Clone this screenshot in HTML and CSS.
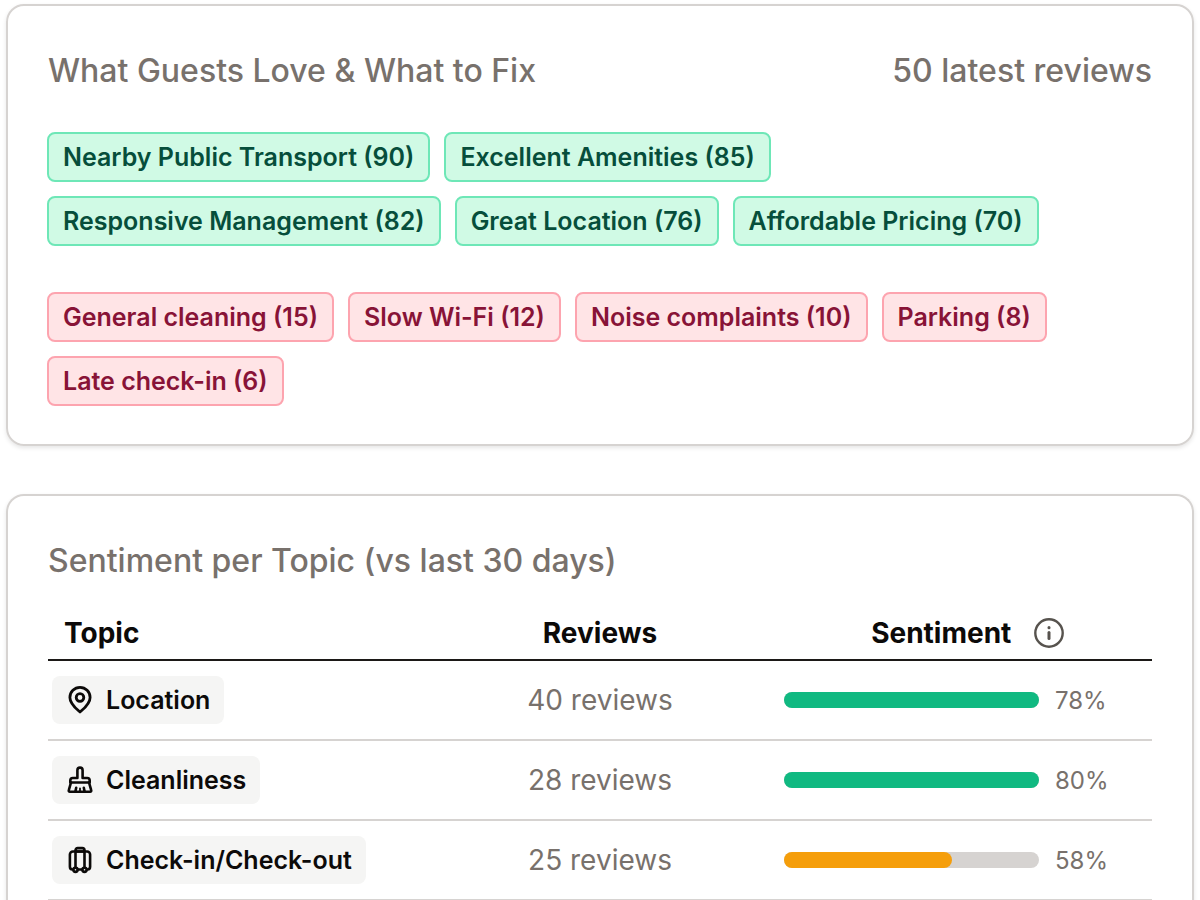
FILE: index.html
```html
<!DOCTYPE html>
<html lang="en">
<head>
    <meta charset="UTF-8">
    <meta name="viewport" content="width=device-width, initial-scale=1.0">
    <title>Guest Reviews</title>
    <link rel="stylesheet" href="styles.css">
</head>
<body>
    <main class="page">
        <!-- review highlights -->
        <section class="card">
            <div class="card-header">
                <h2>What Guests Love &amp; What to Fix</h2>
                <p>50 latest reviews</p>
            </div>
            <ul class="tags tags-good">
                <li>Nearby Public Transport (90)</li>
                <li>Excellent Amenities (85)</li>
                <li>Responsive Management (82)</li>
                <li>Great Location (76)</li>
                <li>Affordable Pricing (70)</li>
            </ul>
            <ul class="tags tags-bad">
                <li>General cleaning (15)</li>
                <li>Slow Wi-Fi (12)</li>
                <li>Noise complaints (10)</li>
                <li>Parking (8)</li>
                <li>Late check-in (6)</li>
            </ul>
        </section>

        <!-- sentiment table -->
        <section class="card card-open">
            <div class="card-header">
                <h2>Sentiment per Topic (vs last 30 days)</h2>
            </div>
            <table class="topics">
                <thead>
                    <tr>
                        <th class="col-topic">Topic</th>
                        <th class="col-reviews">Reviews</th>
                        <th class="col-sentiment">
                            <div class="sentiment-title">
                                Sentiment
                                <button class="info" type="button" aria-label="About sentiment">
                                    <svg viewBox="0 0 32 32" width="32" height="32" fill="none" stroke="currentColor" stroke-width="2.4" stroke-linecap="round">
                                        <circle cx="16" cy="16" r="13.7"/>
                                        <path d="M16 15.5v6" stroke-width="3"/>
                                        <path d="M16 10.6v.2" stroke-width="3"/>
                                    </svg>
                                </button>
                            </div>
                        </th>
                    </tr>
                </thead>
                <tbody>
                    <tr>
                        <td>
                            <span class="topic">
                                <svg viewBox="0 0 32 32" width="32" height="32" fill="none" stroke="currentColor" stroke-width="2.8" stroke-linejoin="round">
                                    <path d="M16 28C12.6 25 5.9 20 5.9 13.4a10.1 10.1 0 0 1 20.2 0C26.1 20 19.4 25 16 28z"/>
                                    <circle cx="16" cy="13.5" r="3.8"/>
                                </svg>
                                Location
                            </span>
                        </td>
                        <td class="count">40 reviews</td>
                        <td>
                            <div class="score">
                                <div class="bar"><div class="fill fill-good"></div></div>
                                <span>78%</span>
                            </div>
                        </td>
                    </tr>
                    <tr>
                        <td>
                            <span class="topic">
                                <svg viewBox="0 0 32 32" width="32" height="32" fill="none" stroke="currentColor" stroke-width="2.6" stroke-linejoin="round" stroke-linecap="round">
                                    <path d="M13.4 14V6.2a2.6 2.6 0 0 1 5.2 0V14H23.2a2.5 2.5 0 0 1 2.5 2.5V18.5H6.3V16.5a2.5 2.5 0 0 1 2.5-2.5z"/>
                                    <path d="M7 18.5L4.8 26.2a1.1 1.1 0 0 0 1 1.5H26.2a1.1 1.1 0 0 0 1-1.5L25 18.5"/>
                                    <path d="M12.2 23.8L11.4 27.5M19.8 23.8L20.6 27.5"/>
                                    <path d="M16 24.5V27.5" stroke-width="1.8"/>
                                </svg>
                                Cleanliness
                            </span>
                        </td>
                        <td class="count">28 reviews</td>
                        <td>
                            <div class="score">
                                <div class="bar"><div class="fill fill-good"></div></div>
                                <span>80%</span>
                            </div>
                        </td>
                    </tr>
                    <tr>
                        <td>
                            <span class="topic">
                                <svg viewBox="0 0 32 32" width="32" height="32" fill="none" stroke="currentColor" stroke-width="2.6" stroke-linejoin="round" stroke-linecap="round">
                                    <path d="M8.5 25.5a2.8 2.8 0 0 1-2.6-2.8V10.5a3 3 0 0 1 3-3H23.1a3 3 0 0 1 3 3V22.7a2.8 2.8 0 0 1-2.6 2.8"/>
                                    <path d="M11.5 23.5V6.3a2.2 2.2 0 0 1 2.2-2.2H18.3a2.2 2.2 0 0 1 2.2 2.2V23.5M11.5 7.5H20.5M14 25.5H18"/>
                                    <circle cx="11.5" cy="25.8" r="2.1"/>
                                    <circle cx="20.5" cy="25.8" r="2.1"/>
                                </svg>
                                Check-in/Check-out
                            </span>
                        </td>
                        <td class="count">25 reviews</td>
                        <td>
                            <div class="score">
                                <div class="bar"><div class="fill fill-mid"></div></div>
                                <span>58%</span>
                            </div>
                        </td>
                    </tr>
                </tbody>
            </table>
        </section>
    </main>
</body>
</html>
```
FILE: styles.css
```css
* {
    box-sizing: border-box;
}

body {
    margin: 0;
    background-color: #ffffff;
    color: #0c0a09;
    font-family: 'Inter', sans-serif;
}

h2, p, ul {
    margin: 0;
    padding: 0;
}

.page {
    display: flex;
    flex-direction: column;
    gap: 48px;
    padding: 4px 6px 0;
}

.card {
    padding: 40px 40px 38px;
    border: 2px solid #d6d3d1;
    border-radius: 18px;
    box-shadow: 0 2px 4px rgba(0, 0, 0, 0.1);
}

.card-open {
    padding-bottom: 0;
    border-bottom: none;
    border-radius: 18px 18px 0 0;
}

.card-header {
    display: flex;
    justify-content: space-between;
    line-height: 50px;
    color: #78716c;
}

.card-header h2,
.card-header p {
    font-size: 32px;
    font-weight: 500;
}

/* tags */
.tags {
    display: flex;
    flex-wrap: wrap;
    gap: 14px;
    margin: 36px -1px 0;
    list-style: none;
}

.tags li {
    padding: 0 14px;
    border: 2px solid;
    border-radius: 8px;
    font-size: 25px;
    font-weight: 600;
    line-height: 46px;
}

.tags-good li {
    background-color: #d0fae5;
    border-color: #6ee7b7;
    color: #064e3b;
}

.tags-bad {
    margin-top: 46px;
}

.tags-bad li {
    background-color: #ffe4e6;
    border-color: #fda4af;
    color: #881337;
}

/* table */
.topics {
    width: 100%;
    margin-top: 20px;
    border-collapse: collapse;
    table-layout: fixed;
}

.topics th {
    height: 54px;
    padding: 0 16px;
    border-bottom: 2px solid #1c1917;
    font-size: 28px;
    font-weight: 700;
}

.topics td {
    height: 80px;
    padding: 0 4px;
    border-bottom: 2px solid #d6d3d1;
}

.topics .col-topic {
    width: 36%;
    text-align: left;
}

.topics .col-reviews {
    width: 28%;
}

.topics .col-sentiment {
    padding: 0 0 0 30px;
}

.sentiment-title {
    display: flex;
    align-items: center;
    justify-content: center;
    gap: 22px;
}

.info {
    display: flex;
    padding: 0;
    border: none;
    background: none;
    color: #57534e;
}

.topic {
    display: inline-flex;
    align-items: center;
    gap: 10px;
    padding: 0 14px 0 12px;
    border-radius: 8px;
    background-color: #f5f5f4;
    font-size: 25px;
    font-weight: 600;
    line-height: 48px;
    vertical-align: middle;
}

.topics .count {
    color: #78716c;
    font-size: 28px;
    text-align: center;
}

.score {
    display: flex;
    align-items: center;
    gap: 16px;
    padding: 0 25px;
    color: #78716c;
    font-size: 24px;
}

.score span {
    width: 68px;
}

.bar {
    flex: 1;
    height: 16px;
    border-radius: 8px;
    background-color: #d6d3d1;
}

.fill {
    height: 100%;
    border-radius: 8px;
}

.fill-good {
    background-color: #10b981;
}

.fill-mid {
    width: 66%;
    background-color: #f59e0b;
}
```
